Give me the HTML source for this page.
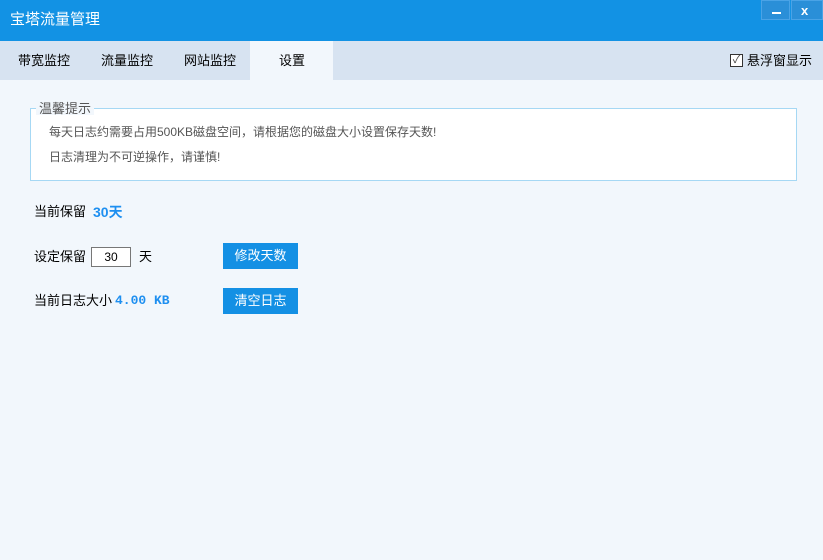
<!DOCTYPE html>
<html><head><meta charset="utf-8"><style>
body{margin:0;width:823px;height:560px;overflow:hidden;background:#f2f7fc;font-family:"Liberation Sans","Noto Sans CJK SC",sans-serif;font-size:12px;position:relative}
.a{position:absolute;line-height:1}
.title{left:0;top:0;width:823px;height:41px;background:#1292e4}
.tabs{left:0;top:41px;width:823px;height:39px;background:#d7e3f1}
.tab{top:41px;height:39px;line-height:39px;font-size:13px;color:#000}
.btn{background:#1490e4;color:#fff;width:75px;height:26px;line-height:26px;text-align:center;font-size:13px}
</style></head><body>
<div class="a title"></div>
<div class="a" style="left:10px;top:12px;color:#fff;font-size:15px">宝塔流量管理</div>
<div class="a" style="left:761px;top:0;width:29px;height:20px;background:#2a8fd8;border:1px solid #4aa3e6;box-sizing:border-box"></div>
<div class="a" style="left:791px;top:0;width:32px;height:20px;background:#2a8fd8;border:1px solid #4aa3e6;box-sizing:border-box"></div>
<div class="a" style="left:772px;top:12px;width:9px;height:2px;background:#fff"></div>
<div class="a" style="left:801px;top:4px;color:#fff;font-size:13px;font-weight:bold">x</div>
<div class="a tabs"></div>
<div class="a" style="left:250px;top:41px;width:83px;height:39px;background:#f2f7fc"></div>
<div class="a tab" style="left:18px;line-height:39px">带宽监控</div>
<div class="a tab" style="left:101px;line-height:39px">流量监控</div>
<div class="a tab" style="left:184px;line-height:39px">网站监控</div>
<div class="a tab" style="left:279px;line-height:39px">设置</div>
<div class="a" style="left:730px;top:54px;width:11px;height:11px;border:1px solid #333;background:#fff;font-size:11px;line-height:11px;text-align:center;color:#444">✓</div>
<div class="a tab" style="left:747px;line-height:39px">悬浮窗显示</div>
<div class="a" style="left:30px;top:108px;width:765px;height:71px;border:1px solid #a6d8f4;background:#fff"></div>
<div class="a" style="left:36px;top:102px;padding:0 3px;background:#f2f7fc;color:#555;font-size:13px">温馨提示</div>
<div class="a" style="left:49px;top:126px;color:#555">每天日志约需要占用500KB磁盘空间，请根据您的磁盘大小设置保存天数!</div>
<div class="a" style="left:49px;top:151px;color:#555">日志清理为不可逆操作，请谨慎!</div>
<div class="a" style="left:34px;top:205px;font-size:13px">当前保留</div>
<div class="a" style="left:93px;top:205px;font-size:14px;font-weight:bold;color:#1e8ff0">30天</div>
<div class="a" style="left:34px;top:250px;font-size:13px">设定保留</div>
<div class="a" style="left:91px;top:247px;width:38px;height:18px;border:1px solid #777;background:#fff;text-align:center;line-height:18px">30</div>
<div class="a" style="left:139px;top:250px;font-size:13px">天</div>
<div class="a btn" style="left:223px;top:243px;line-height:26px">修改天数</div>
<div class="a" style="left:34px;top:294px;font-size:13px">当前日志大小</div>
<div class="a" style="left:115px;top:294px;font-size:13px;font-weight:bold;color:#1e8ff0;font-family:'Liberation Mono',monospace">4.00 KB</div>
<div class="a btn" style="left:223px;top:288px;line-height:26px">清空日志</div>
</body></html>
